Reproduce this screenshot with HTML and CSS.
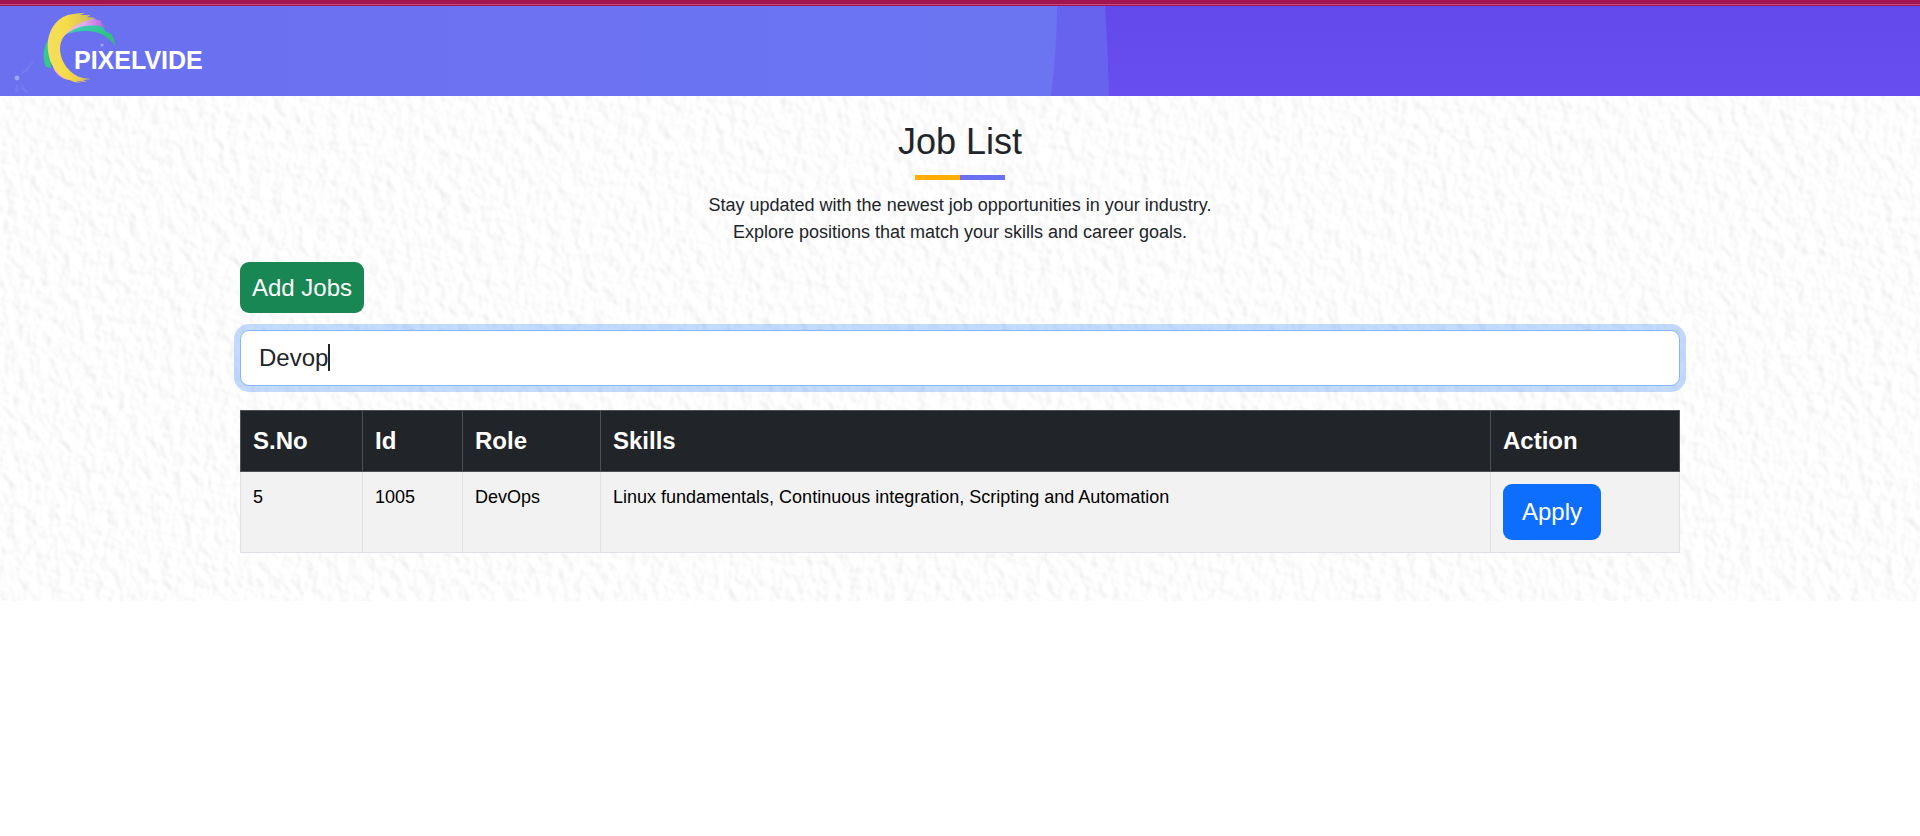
FILE: index.html
```html
<!DOCTYPE html>
<html lang="en">
<head>
<meta charset="utf-8">
<meta name="viewport" content="width=device-width, initial-scale=1">
<title>Job List</title>
<link rel="stylesheet" href="styles.css">
</head>
<body>
<div class="top-strip"></div>
<header class="site-header">
  <svg class="header-shapes" viewBox="0 0 1920 90" preserveAspectRatio="none" aria-hidden="true">
    <defs>
      <linearGradient id="left" x1="0" x2="1" y1="0" y2="0">
        <stop offset="0" stop-color="#6a70f0"/>
        <stop offset="1" stop-color="#6b75f2"/>
      </linearGradient>
      <linearGradient id="right" x1="0" x2="0" y1="0" y2="1">
        <stop offset="0" stop-color="#6449ea"/>
        <stop offset="1" stop-color="#684eee"/>
      </linearGradient>
    </defs>
    <rect width="1920" height="90" fill="url(#right)"/>
    <path d="M0 0H1105Q1108 45 1109 90H0Z" fill="#6863ee"/>
    <path d="M0 0H1057Q1057 40 1051 90H0Z" fill="url(#left)"/>
  </svg>
  <a class="brand" href="#" aria-label="Pixelvide">
    <svg class="brand-logo" viewBox="0 0 240 90" aria-hidden="true">
      <defs>
        <linearGradient id="green" x1="0" x2="1" y1="0" y2="1">
          <stop offset="0" stop-color="#42cfc5"/>
          <stop offset=".6" stop-color="#2fc486"/>
          <stop offset="1" stop-color="#25c655"/>
        </linearGradient>
        <linearGradient id="pink" x1="0" x2="1" y1="0" y2="0">
          <stop offset="0" stop-color="#f5c4b4"/>
          <stop offset=".5" stop-color="#e5aaf2"/>
          <stop offset="1" stop-color="#ad60d8"/>
        </linearGradient>
        <linearGradient id="yellow" x1="0" x2="1" y1="0" y2="0">
          <stop offset="0" stop-color="#f3df62"/>
          <stop offset=".4" stop-color="#f6dc45"/>
          <stop offset="1" stop-color="#c5b36b"/>
        </linearGradient>
      </defs>
      <g class="spark">
        <circle cx="17" cy="72" r="2.4"/>
        <circle cx="102" cy="39" r="1.6"/>
        <path d="M20 68L36 52L27 66ZM24 69L43 62L30 67ZM17 75L15 86H18ZM20 75L29 88L22 84Z" opacity=".2"/>
      </g>
      <path d="M50 31C43 40 42 52 46 61L51 62Z" fill="#35c88b"/>
      <path d="M67 28C78 17 94 16 104 22L105 25L111 28C114 32 114 36 116 41C107 26 88 21 67 28Z" fill="url(#green)"/>
      <path d="M62 32C66 18 78 12 90 12L102 15L101 17L106 21C91 18 76 18 62 32Z" fill="url(#pink)"/>
      <path d="M53 61C55 67 61 73 69 74L64 62Z" fill="#efb0c0"/>
      <path d="M85 7L80 9L91 9L87 11L96 12L90 14C74 17 61 28 60 42C60 56 70 69 83 72L91 73L83 74L87 76L76 75L81 77C64 75 52 65 49 50C45 33 51 18 63 11C69 8 77 7 85 7Z" fill="url(#yellow)"/>
      <text class="brand-text" x="74" y="63">PIXELVIDE</text>
    </svg>
  </a>
</header>

<main class="jobs">
  <svg class="paper" aria-hidden="true">
    <filter id="grain" x="0" y="0" width="100%" height="100%" color-interpolation-filters="sRGB">
      <feTurbulence type="fractalNoise" baseFrequency=".09 .08" numOctaves="2" seed="8" result="noise"/>
      <feDiffuseLighting in="noise" surfaceScale="1" lighting-color="#ffffff" result="lit">
        <feDistantLight azimuth="150" elevation="62"/>
      </feDiffuseLighting>
      <feColorMatrix type="matrix" values=".42 0 0 0 .62  0 .42 0 0 .62  0 0 .42 0 .62  0 0 0 1 0"/>
    </filter>
    <rect width="100%" height="100%" filter="url(#grain)"/>
  </svg>
  <div class="container">
    <h1 class="title">Job List</h1>
    <div class="divider"></div>
    <p class="intro">Stay updated with the newest job opportunities in your industry.<br>Explore positions that match your skills and career goals.</p>
    <button class="btn btn-add" type="button">Add Jobs</button>
    <div class="search">
      <input class="search-input" type="text" value="Devop" aria-label="Search jobs">
      <span class="caret" aria-hidden="true"></span>
    </div>
    <table class="job-table">
      <thead>
        <tr>
          <th class="col-sno" scope="col">S.No</th>
          <th class="col-id" scope="col">Id</th>
          <th class="col-role" scope="col">Role</th>
          <th scope="col">Skills</th>
          <th class="col-action" scope="col">Action</th>
        </tr>
      </thead>
      <tbody>
        <tr>
          <td>5</td>
          <td>1005</td>
          <td>DevOps</td>
          <td>Linux fundamentals, Continuous integration, Scripting and Automation</td>
          <td><button class="btn btn-apply" type="button">Apply</button></td>
        </tr>
      </tbody>
    </table>
  </div>
</main>
</body>
</html>
```
FILE: styles.css
```css
* {
  box-sizing: border-box;
}

body {
  margin: 0;
  background: #fff;
  color: #212529;
  font-family: "Liberation Sans", Arial, sans-serif;
  font-size: 18px;
  line-height: 27px;
}

.top-strip {
  height: 6px;
  background: linear-gradient(#a3154f 4px, #c04a7b 4px, #c04a7b 5px, #a3154f 5px);
}

.site-header {
  position: relative;
  background: #6449ea;
}

.header-shapes {
  position: absolute;
  inset: 0;
  width: 100%;
  height: 100%;
}

.brand {
  position: relative;
  display: block;
  width: 240px;
}

.brand-logo {
  display: block;
  width: 240px;
  height: 90px;
}

.brand-text {
  fill: #fff;
  font-size: 25px;
  font-weight: 700;
}

.spark {
  fill: #9aa6f5;
}

.jobs {
  position: relative;
  padding: 24px 0 48px;
  background: #fafafa;
}

.paper {
  position: absolute;
  inset: 0;
  width: 100%;
  height: 100%;
}

.container {
  position: relative;
  width: 75%;
  margin: 0 auto;
}

.title {
  margin: 0 0 12px;
  font-size: 36px;
  font-weight: 400;
  line-height: 43px;
  text-align: center;
}

.divider {
  width: 90px;
  height: 5px;
  margin: 0 auto 12px;
  background: linear-gradient(90deg, #ffad00 50%, #6a70f2 50%);
}

.intro {
  margin: 0 0 16px;
  text-align: center;
}

.btn {
  display: block;
  border: 0;
  border-radius: 9px;
  color: #fff;
  font-family: inherit;
  font-size: 24px;
  line-height: 36px;
}

.btn-add {
  margin-bottom: 17px;
  padding: 8px 12px 7px;
  background: #198754;
}

.btn-apply {
  padding: 10px 19px;
  background: #0d6efd;
}

.search {
  position: relative;
  margin-bottom: 24px;
}

.search-input {
  display: block;
  width: 100%;
  height: 56px;
  padding: 9px 18px;
  border: 1px solid #86b7fe;
  border-radius: 9px;
  outline: 0;
  background: #fff;
  box-shadow: 0 0 0 6px rgba(13, 110, 253, .25);
  color: #212529;
  font-family: inherit;
  font-size: 24px;
}

.caret {
  position: absolute;
  top: 14px;
  left: 88px;
  width: 2px;
  height: 27px;
  background: #212529;
}

.job-table {
  width: 100%;
  border-collapse: collapse;
  table-layout: fixed;
}

.job-table th,
.job-table td {
  padding: 12px;
  text-align: left;
  vertical-align: top;
}

.job-table th {
  border: 1px solid #4d5154;
  background: #212529;
  color: #fff;
  font-size: 24px;
  line-height: 36px;
}

.job-table td {
  border: 1px solid #dee2e6;
  border-top-color: #4d5154;
  background: #f2f2f2;
  color: #000;
}

.col-sno {
  width: 122px;
}

.col-id {
  width: 100px;
}

.col-role {
  width: 138px;
}

.col-action {
  width: 189px;
}
```
